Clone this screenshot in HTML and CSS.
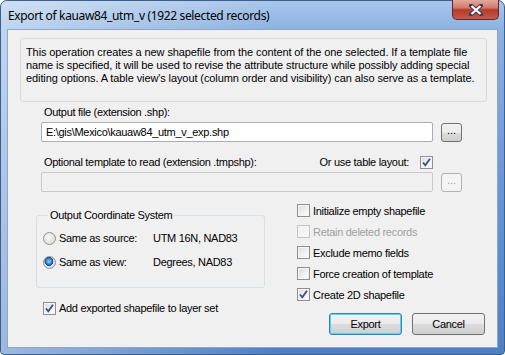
FILE: index.html
```html
<!DOCTYPE html>
<html lang="en">
    <head>
        <meta charset="UTF-8">
        <title>Export of kauaw84_utm_v</title>
        <link rel="stylesheet" href="styles.css">
    </head>
    <body>
        <div class="window">

            <!-- title bar -->
            <div class="titlebar">
                <span class="title">Export of kauaw84_utm_v (1922 selected records)</span>
                <button class="close" type="button">
                    <svg width="14" height="12" viewBox="0 0 14 12">
                        <path d="M2 1.5 L12 10.5 M12 1.5 L2 10.5" stroke="#3c3c50" stroke-width="4" stroke-linecap="square"/>
                        <path d="M2.5 2 L11.5 10 M11.5 2 L2.5 10" stroke="#fff" stroke-width="2.2"/>
                    </svg>
                </button>
            </div>

            <div class="client">

                <div class="intro">
                    This operation creates a new shapefile from the content of the one selected. If a template file<br>
                    name is specified, it will be used to revise the attribute structure while possibly adding special<br>
                    editing options. A table view's layout (column order and visibility) can also serve as a template.
                </div>

                <!-- files -->
                <div class="files">
                    <div class="field-label">Output file (extension .shp):</div>
                    <div class="file-row">
                        <input class="path" type="text" value="E:\gis\Mexico\kauaw84_utm_v_exp.shp">
                        <button class="browse" type="button">...</button>
                    </div>

                    <div class="template-head">
                        <span>Optional template to read (extension .tmpshp):</span>
                        <span class="layout">Or use table layout:
                            <span class="box checked">
                                <svg width="11" height="11" viewBox="0 0 11 11"><path d="M2 5.5 L4.3 8.3 L9 1.8" stroke="#3a4f8a" stroke-width="1.8" fill="none"/></svg>
                            </span>
                        </span>
                    </div>
                    <div class="file-row">
                        <input class="path" type="text" disabled>
                        <button class="browse" type="button" disabled>...</button>
                    </div>
                </div>

                <!-- options -->
                <div class="lower">
                    <div class="left">
                        <fieldset class="group">
                            <legend>Output Coordinate System</legend>
                            <div class="radio-row">
                                <span class="radio"></span>
                                <span class="radio-text">Same as source:</span>
                                <span>UTM 16N, NAD83</span>
                            </div>
                            <div class="radio-row">
                                <span class="radio on"></span>
                                <span class="radio-text">Same as view:</span>
                                <span>Degrees, NAD83</span>
                            </div>
                        </fieldset>

                        <div class="check add">
                            <span class="box checked">
                                <svg width="11" height="11" viewBox="0 0 11 11"><path d="M2 5.5 L4.3 8.3 L9 1.8" stroke="#3a4f8a" stroke-width="1.8" fill="none"/></svg>
                            </span>
                            Add exported shapefile to layer set
                        </div>
                    </div>

                    <div class="right">
                        <div class="check"><span class="box"></span>Initialize empty shapefile</div>
                        <div class="check disabled"><span class="box"></span>Retain deleted records</div>
                        <div class="check"><span class="box"></span>Exclude memo fields</div>
                        <div class="check"><span class="box"></span>Force creation of template</div>
                        <div class="check">
                            <span class="box checked">
                                <svg width="11" height="11" viewBox="0 0 11 11"><path d="M2 5.5 L4.3 8.3 L9 1.8" stroke="#3a4f8a" stroke-width="1.8" fill="none"/></svg>
                            </span>
                            Create 2D shapefile
                        </div>

                        <div class="buttons">
                            <button class="btn default" type="button">Export</button>
                            <button class="btn" type="button">Cancel</button>
                        </div>
                    </div>
                </div>

            </div>
        </div>
    </body>
</html>
```

FILE: styles.css
```css
body {
    margin: 0;
    background: #fff;
    font-family: "Liberation Sans", Arial, sans-serif;
    font-size: 11px;
    letter-spacing: -0.3px;
    color: #000;
}
.window {
    width: 505px;
    height: 355px;
    box-sizing: border-box;
    padding: 0 6px 6px;
    border: 1px solid #3d5f8e;
    border-radius: 7px 7px 4px 4px;
    background:
        linear-gradient(90deg, rgba(255,255,255,0.45), rgba(255,255,255,0) 55%),
        linear-gradient(to bottom, #a9c6ea 0, #8cb2e1 28px, #6b98d5 50%, #4c7fc6 100%);
    display: flex;
    flex-direction: column;
}
.titlebar {
    height: 28px;
    display: flex;
    align-items: flex-start;
}
.title {
    font-family: "Noto Sans", "Open Sans", sans-serif;
    font-size: 12px;
    letter-spacing: -0.35px;
    margin: 6px 0 0 1px;
}
.close {
    margin: -1px -1px 0 auto;
    width: 47px;
    height: 20px;
    padding: 0;
    border: 1px solid #5a2a26;
    border-top: none;
    border-radius: 0 0 5px 5px;
    background: linear-gradient(to bottom, #e4a9a0 0, #d47a6c 40%, #b53b2c 52%, #c9574a 100%);
    display: flex;
    align-items: center;
    justify-content: center;
}
.client {
    flex: 1;
    background: #f0f0f0;
    border: 1px solid #8fa6c4;
}
.intro {
    margin: 8px 10px 0 12px;
    height: 64px;
    box-sizing: border-box;
    padding: 7px 5px;
    border: 1px solid #dadada;
    border-radius: 3px;
    line-height: 13px;
    letter-spacing: -0.1px;
    white-space: nowrap;
}
.files {
    padding-left: 33px;
    width: 421px;
}
.field-label {
    margin: 4px 0 0 3px;
    line-height: 13px;
}
.file-row {
    display: flex;
    align-items: center;
    gap: 8px;
    margin-top: 3px;
}
.path {
    width: 392px;
    height: 20px;
    box-sizing: border-box;
    margin: 0;
    padding: 0 4px;
    border: 1px solid #abadb3;
    border-radius: 2px;
    background: #fff;
    font-family: inherit;
    font-size: 11px;
    letter-spacing: -0.3px;
}
.path:disabled {
    background: #f0f0f0;
    border-color: #c8c8c8;
}
.browse {
    width: 21px;
    height: 19px;
    padding: 0 0 4px;
    border: 1px solid #707070;
    border-radius: 3px;
    background: linear-gradient(to bottom, #f2f2f2 0, #ebebeb 50%, #dddddd 51%, #cfcfcf 100%);
    font-family: inherit;
    font-size: 11px;
    line-height: 10px;
    color: #000;
}
.browse:disabled {
    border-color: #adb2b5;
    background: #f4f4f4;
    color: #a0a0a0;
}
.template-head {
    width: 392px;
    display: flex;
    justify-content: space-between;
    align-items: center;
    margin-top: 14px;
    padding-left: 3px;
    box-sizing: border-box;
    line-height: 13px;
}
.layout {
    display: flex;
    align-items: center;
    gap: 11px;
}
.box {
    width: 13px;
    height: 13px;
    box-sizing: border-box;
    border: 1px solid #8e8f8f;
    background: linear-gradient(135deg, #dcdcdc 0, #f5f5f5 70%, #fff 100%);
    box-shadow: inset 0 0 0 1px #f4f4f4;
    display: inline-flex;
    align-items: center;
    justify-content: center;
    flex-shrink: 0;
}
.lower {
    display: grid;
    grid-template-columns: 229px 188px;
    column-gap: 32px;
    padding-left: 28px;
    margin-top: 8px;
}
.group {
    margin: 9px 0 0;
    padding: 8px 0 17px 6px;
    border: 1px solid #d5dfe5;
    border-radius: 3px;
}
.group legend {
    padding: 0 2px;
    margin-left: 5px;
    line-height: 13px;
}
.radio-row {
    display: flex;
    align-items: center;
    height: 16px;
}
.radio-row + .radio-row {
    margin-top: 8px;
}
.radio {
    width: 13px;
    height: 13px;
    box-sizing: border-box;
    border-radius: 50%;
    border: 1px solid #8e8f8f;
    background: radial-gradient(circle at 40% 40%, #f8f8f8 0, #dedede 70%);
    margin-right: 3px;
}
.radio.on {
    background:
        radial-gradient(circle at 45% 40%, #9ad4ff 0, #2b7ad0 35%, #103e7a 48%, transparent 52%),
        radial-gradient(circle at 40% 40%, #f8f8f8 0, #dedede 70%);
}
.radio-text {
    min-width: 94px;
}
.check {
    display: flex;
    align-items: center;
    gap: 3px;
    height: 21px;
}
.check.disabled {
    color: #a0a0a0;
}
.check.disabled .box {
    border-color: #c4c4c4;
    background: #f4f4f4;
}
.add {
    margin: 12px 0 0 7px;
    height: 16px;
}
.buttons {
    display: flex;
    justify-content: space-between;
    margin: 8px 0 0 32px;
}
.btn {
    width: 73px;
    height: 22px;
    border: 1px solid #707070;
    border-radius: 3px;
    background: linear-gradient(to bottom, #f2f2f2 0, #ebebeb 50%, #dddddd 51%, #cfcfcf 100%);
    font-family: inherit;
    font-size: 11px;
    letter-spacing: -0.3px;
    color: #000;
}
.btn.default {
    border-color: #3c7fb1;
    box-shadow: inset 0 0 0 1px #48d8fb;
}
```
